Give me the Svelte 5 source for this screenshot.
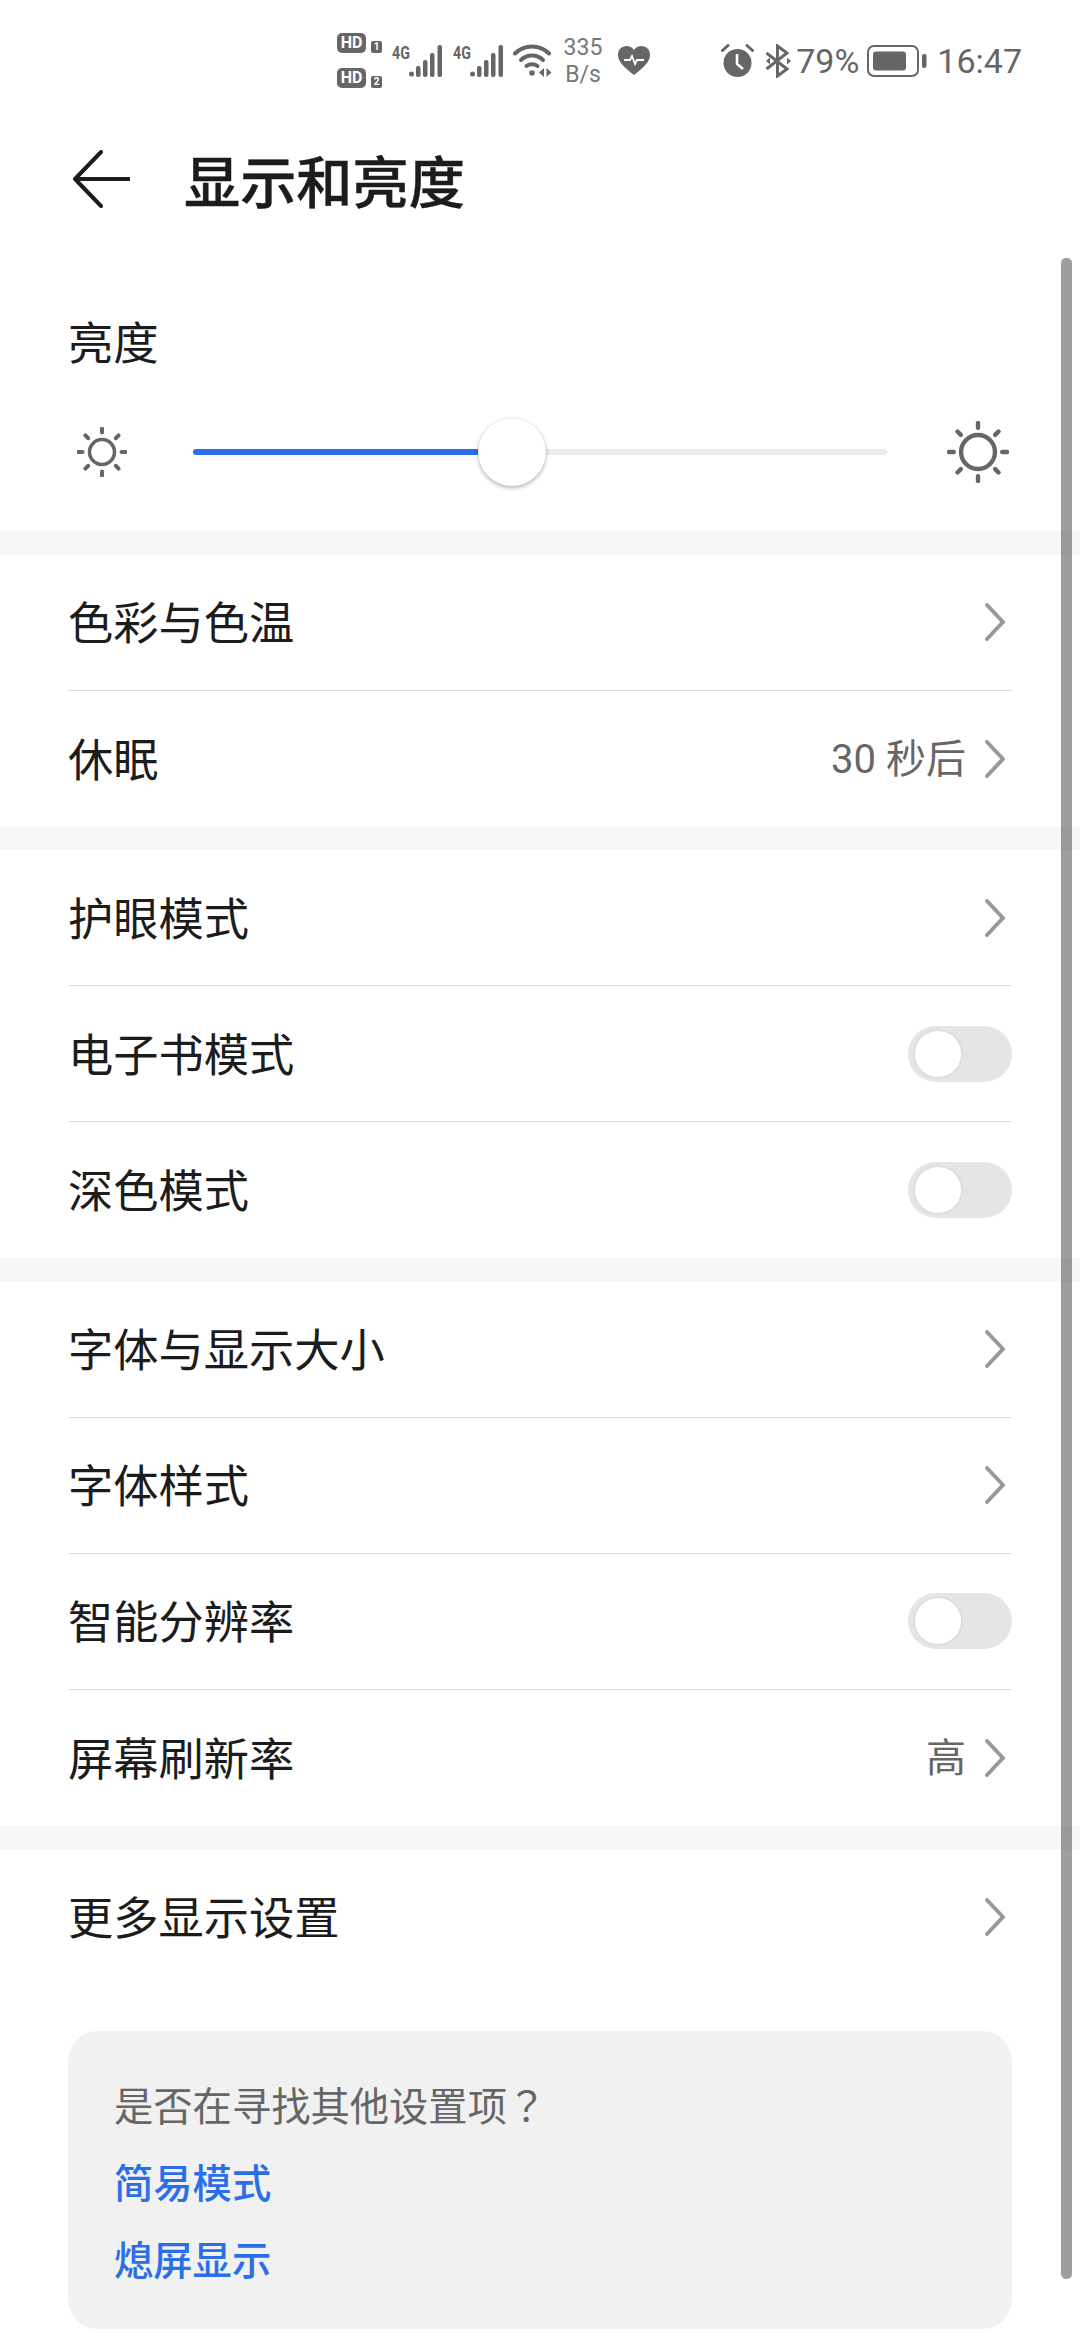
<script>
  const brightness = 46;

  const sections = [
    [
      { label: '色彩与色温', type: 'link' },
      { label: '休眠', type: 'link', value: '30 秒后' }
    ],
    [
      { label: '护眼模式', type: 'link' },
      { label: '电子书模式', type: 'toggle' },
      { label: '深色模式', type: 'toggle' }
    ],
    [
      { label: '字体与显示大小', type: 'link' },
      { label: '字体样式', type: 'link' },
      { label: '智能分辨率', type: 'toggle' },
      { label: '屏幕刷新率', type: 'link', value: '高' }
    ],
    [{ label: '更多显示设置', type: 'link' }]
  ];

  const rays = [0, 45, 90, 135, 180, 225, 270, 315];
</script>

<div class="page">
  <header class="status">
    <div class="status-group left">
      <div class="sims">
        <div class="sim"><span class="hd">HD</span><span class="slot">1</span></div>
        <div class="sim"><span class="hd">HD</span><span class="slot">2</span></div>
      </div>
      {#each [0, 1] as n (n)}
        <div class="net">
          <span class="gen">4G</span>
          <svg width="34" height="32" viewBox="0 0 34 32" fill="#666">
            <circle cx="2.5" cy="29" r="2.5" />
            <rect x="7" y="21" width="4.5" height="11" rx="2" />
            <rect x="14" y="15" width="4.5" height="17" rx="2" />
            <rect x="21" y="8" width="4.5" height="24" rx="2" />
            <rect x="28.5" y="0" width="4.5" height="32" rx="2" />
          </svg>
        </div>
      {/each}
      <svg class="wifi" width="39" height="34" viewBox="0 0 39 34" fill="none" stroke="#666" stroke-width="4" stroke-linecap="round">
        <path d="M2 9.5C11 0 27 0 36 9.5" />
        <path d="M8 16C14 10 24 10 30 16" />
        <path d="M13.5 22C16.5 19.5 21.5 19.5 24.5 22" />
        <circle cx="19" cy="29" r="2.8" fill="#666" stroke="none" />
        <path d="M31 24v9l-5-4.5zM33.5 24v9l5-4.5z" fill="#666" stroke="none" />
      </svg>
      <div class="speed"><span>335</span><span>B/s</span></div>
      <svg class="heart" width="32" height="29" viewBox="0 0 32 29">
        <path d="M16 29C6 21 0 16 0 8.5C0 3.5 4 0 8.5 0C11.5 0 14.5 1.5 16 4C17.5 1.5 20.5 0 23.5 0C28 0 32 3.5 32 8.5C32 16 26 21 16 29Z" fill="#666" />
        <path d="M6 14h6l2-4 3 8 2-4h7" fill="none" stroke="#fff" stroke-width="1.8" />
      </svg>
    </div>
    <div class="status-group right">
      <svg width="33" height="34" viewBox="0 0 33 34">
        <circle cx="16.5" cy="19" r="14" fill="#666" />
        <path d="M16 10v10l6 5" fill="none" stroke="#fff" stroke-width="2.6" />
        <path d="M1.5 6.5L7 1.5M31.5 6.5L26 1.5" stroke="#666" stroke-width="3" stroke-linecap="round" />
      </svg>
      <svg class="bt" width="27" height="34" viewBox="0 0 27 34" fill="none" stroke="#666" stroke-width="3">
        <path d="M1.5 9L22 25L12.5 32V2L22 9L1.5 25" />
        <path d="M22 13.5l4 3.5-4 3.5z" fill="#666" stroke="none" />
        <path d="M5 13.5l-4 3.5 4 3.5z" fill="#666" stroke="none" />
      </svg>
      <span class="clock pct">79%</span>
      <svg class="battery" width="60" height="32" viewBox="0 0 60 32">
        <rect x="1" y="1" width="50" height="30" rx="6" fill="none" stroke="#666" stroke-width="2" />
        <rect x="6" y="6.5" width="33" height="19" rx="3" fill="#666" />
        <rect x="55" y="9" width="4.5" height="14" rx="2" fill="#666" />
      </svg>
      <span class="clock">16:47</span>
    </div>
  </header>

  <div class="titlebar">
    <svg width="58" height="58" viewBox="0 0 58 58" fill="none" stroke="#1c1c1c" stroke-width="4" stroke-linecap="round" stroke-linejoin="round">
      <path d="M29 2L3 29L29 56M3 29H57" />
    </svg>
    <h1>显示和亮度</h1>
  </div>

  <section class="brightness">
    <div class="brightness-label">亮度</div>
    <div class="slider-row">
      <svg class="sun" width="50" height="50" viewBox="-25 -25 50 50" fill="none" stroke="#666">
        <circle r="12.5" stroke-width="3.5" />
        {#each rays as deg (deg)}
          <line y1="-19.5" y2="-23.5" stroke-width="4" stroke-linecap="round" transform="rotate({deg})" />
        {/each}
      </svg>
      <div class="track">
        <div class="fill" style="width: {brightness}%"></div>
        <div class="thumb" style="left: {brightness}%"></div>
      </div>
      <svg class="sun" width="62" height="64" viewBox="-32 -32 64 64" fill="none" stroke="#666">
        <circle r="17.5" stroke-width="4.5" />
        {#each rays as deg (deg)}
          <line y1="-25" y2="-30" stroke-width="4.5" stroke-linecap="round" transform="rotate({deg})" />
        {/each}
      </svg>
    </div>
  </section>

  {#each sections as rows, i (i)}
    <div class="band"></div>
    <section class="list">
      {#each rows as row (row.label)}
        <div class="row">
          <span class="row-label">{row.label}</span>
          {#if row.type === 'toggle'}
            <div class="toggle"><div class="knob"></div></div>
          {:else}
            <div class="row-end">
              {#if row.value}<span class="row-value">{row.value}</span>{/if}
              <svg class="chevron" width="20" height="38" viewBox="0 0 20 38" fill="none" stroke="#999" stroke-width="4" stroke-linecap="round" stroke-linejoin="round">
                <path d="M2 2L18 19L2 36" />
              </svg>
            </div>
          {/if}
        </div>
      {/each}
    </section>
  {/each}

  <aside class="card">
    <p class="card-q">是否在寻找其他设置项<span class="mark">？</span></p>
    <p class="card-link">简易模式</p>
    <p class="card-link">熄屏显示</p>
  </aside>

  <div class="scrollbar"></div>
</div>

<style>
  :global(body) {
    margin: 0;
    background: #fff;
  }

  .page {
    position: relative;
    width: 1080px;
    height: 2338px;
    overflow: hidden;
    background: #fff;
    color: #1c1c1c;
    font-family: Roboto, "Noto Sans CJK SC", sans-serif;
  }

  .status {
    height: 59px;
    padding: 31px 58px 0 337px;
    display: flex;
    justify-content: space-between;
    align-items: center;
    color: #666;
  }

  .status-group {
    display: flex;
    align-items: center;
  }

  .left {
    gap: 10px;
  }

  .right {
    gap: 10px;
  }

  .sims {
    display: flex;
    flex-direction: column;
    gap: 15px;
  }

  .sim {
    display: flex;
    align-items: flex-end;
    gap: 5px;
    height: 20px;
  }

  .hd {
    width: 29px;
    height: 20px;
    border-radius: 5px;
    background: #666;
    color: #fff;
    font-size: 16px;
    font-weight: 700;
    line-height: 20px;
    text-align: center;
  }

  .slot {
    width: 11px;
    height: 12px;
    border-radius: 2px;
    background: #666;
    color: #fff;
    font-size: 10px;
    font-weight: 700;
    line-height: 12px;
    text-align: center;
  }

  .net {
    display: flex;
    align-items: flex-end;
    width: 51px;
    height: 32px;
  }

  .gen {
    width: 17px;
    align-self: flex-start;
    font-size: 19px;
    font-weight: 700;
    line-height: 15px;
    transform: scaleX(0.75);
    transform-origin: left center;
    white-space: nowrap;
  }

  .wifi {
    margin-left: -1px;
  }

  .speed {
    display: flex;
    flex-direction: column;
    align-items: center;
    width: 42px;
    font-size: 23px;
    line-height: 27px;
    color: #777;
  }

  .heart {
    margin-left: 4px;
  }

  .bt {
    margin-left: 1px;
  }

  .clock {
    font-size: 34px;
    line-height: 40px;
    color: #666;
  }

  .pct {
    margin: 0 -2px 0 -6px;
  }

  .titlebar {
    height: 178px;
    padding-left: 72px;
    display: flex;
    align-items: center;
    gap: 54px;
  }

  h1 {
    margin: 0;
    font-family: "Noto Sans CJK SC", sans-serif;
    font-size: 56.2px;
    font-weight: 500;
    line-height: 70px;
    -webkit-text-stroke: 0.4px #1c1c1c;
  }

  .brightness {
    height: 263px;
    box-sizing: border-box;
    padding-top: 43px;
  }

  .brightness-label {
    padding-left: 68px;
    font-family: "Noto Sans CJK SC", sans-serif;
    font-size: 45.25px;
    line-height: 60px;
  }

  .slider-row {
    margin-top: 48px;
    height: 66px;
    padding: 0 71px 0 77px;
    display: flex;
    align-items: center;
  }

  .track {
    position: relative;
    flex: 1;
    height: 6px;
    margin: 0 60px 0 66px;
    border-radius: 3px;
    background: #ececec;
  }

  .fill {
    height: 100%;
    border-radius: 3px;
    background: #2a6fe8;
  }

  .thumb {
    position: absolute;
    top: 50%;
    width: 68px;
    height: 68px;
    border-radius: 50%;
    background: #fff;
    transform: translate(-50%, -50%);
    box-shadow: 0 2px 4px rgba(0, 0, 0, 0.28), 0 0 1px rgba(0, 0, 0, 0.2);
  }

  .band {
    height: 23.6px;
    background: #f6f6f6;
  }

  .list {
    padding: 0 68px;
  }

  .row {
    height: 136px;
    box-sizing: border-box;
    display: flex;
    justify-content: space-between;
    align-items: center;
    border-bottom: 1.5px solid #dcdcdc;
  }

  .row:last-child {
    border-bottom: none;
  }

  .row-label {
    padding-bottom: 2px;
    font-family: "Noto Sans CJK SC", sans-serif;
    font-size: 45.25px;
    line-height: 60px;
  }

  .row-end {
    display: flex;
    align-items: center;
    gap: 19px;
    padding-right: 7px;
  }

  .row-value {
    padding-top: 2px;
    font-size: 40px;
    line-height: 52px;
    color: #666;
  }

  .toggle {
    width: 104px;
    height: 56px;
    box-sizing: border-box;
    padding: 3px 5px;
    border-radius: 28px;
    background: #e5e5e5;
  }

  .knob {
    width: 50px;
    height: 50px;
    box-sizing: border-box;
    border: 2px solid #dedede;
    border-radius: 50%;
    background: #fff;
  }

  .card {
    margin: 46px 68px 0;
    height: 298px;
    box-sizing: border-box;
    padding: 34px 46px 0;
    border-radius: 30px;
    background: #f1f1f1;
    font-family: "Noto Sans CJK SC", sans-serif;
    font-size: 39.3px;
    line-height: 77px;
  }

  .card p {
    margin: 0;
  }

  .card-q {
    color: #666;
  }

  .mark {
    font-family: "Noto Sans CJK TC", sans-serif;
  }

  .card-link {
    color: #2a6fe8;
    font-weight: 500;
  }

  .scrollbar {
    position: absolute;
    top: 258px;
    left: 1061px;
    width: 11px;
    height: 2021px;
    border-radius: 5px;
    background: rgba(0, 0, 0, 0.38);
  }
</style>
